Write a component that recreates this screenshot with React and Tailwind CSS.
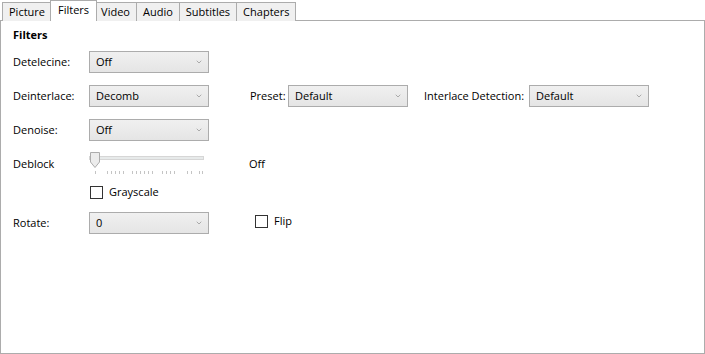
import { ChevronDown } from 'lucide-react'

const TABS = ['Picture', 'Filters', 'Video', 'Audio', 'Subtitles', 'Chapters']

function Combo({ value, className = '' }) {
  return (
    <div className={`h-[22px] w-[120px] flex items-center justify-between pl-[6px] pr-[5px] border border-[#acacac] bg-gradient-to-b from-[#f0f0f0] to-[#e5e5e5] ${className}`}>
      <span>{value}</span>
      <ChevronDown size={8} strokeWidth={2} className="text-[#8a8a8a]" />
    </div>
  )
}

function Check({ label }) {
  return (
    <div className="flex items-center">
      <div className="w-[13px] h-[13px] border border-[#333] bg-white" />
      <span className="ml-[6px]">{label}</span>
    </div>
  )
}

export default function App() {
  return (
    <div className="w-[705px] h-[354px] bg-white text-[11px] text-black flex flex-col whitespace-nowrap" style={{ fontFamily: '"Open Sans", "Noto Sans", sans-serif' }}>
      {/* tab strip */}
      <div className="flex items-end h-[21px] pl-[2px] relative z-10">
        {TABS.map(t => t === 'Filters' ? (
          <div key={t} className="h-[21px] px-[7px] -mx-[2px] bg-white border border-b-0 border-[#acacac] flex items-start pt-[1px] relative">
            {t}
          </div>
        ) : (
          <div key={t} className="h-[19px] px-[6px] bg-[#f0f0f0] border border-b-0 border-[#acacac] -ml-px first:ml-0 flex items-center">
            {t}
          </div>
        ))}
      </div>

      {/* panel */}
      <div className="flex-1 -mt-px border border-[#acacac] bg-white pl-[12px] pt-[6px]">
        <div className="font-bold leading-[16px]">Filters</div>

        <div className="flex items-center mt-[8px] h-[22px]">
          <span className="w-[76px]">Detelecine:</span>
          <Combo value="Off" />
        </div>

        <div className="flex items-center mt-[12px] h-[22px]">
          <span className="w-[76px]">Deinterlace:</span>
          <Combo value="Decomb" />
          <span className="ml-[41px] w-[38px]">Preset:</span>
          <Combo value="Default" />
          <span className="ml-[16px] w-[105px]">Interlace Detection:</span>
          <Combo value="Default" />
        </div>

        <div className="flex items-center mt-[12px] h-[22px]">
          <span className="w-[76px]">Denoise:</span>
          <Combo value="Off" />
        </div>

        <div className="flex items-start mt-[11px] h-[22px]">
          <span className="w-[76px] mt-[4px]">Deblock</span>
          <div className="w-[160px]">
            <svg width="117" height="22" viewBox="0 0 117 22">
              <rect x="0.5" y="4.5" width="114" height="3" fill="#e7eaea" stroke="#d6d6d6" />
              <path d="M1.5 0.5 H10.5 V10 L6 15.5 L1.5 10 Z" fill="#ececec" stroke="#acacac" />
              {[6, 18, 22, 26, 30, 34, 43, 47, 51, 55, 59, 63, 73, 77, 81, 85, 98, 102, 110, 113].map(x => (
                <line key={x} x1={x + 0.5} x2={x + 0.5} y1="19" y2="22" fill="none" stroke="#c4c4c4" />
              ))}
            </svg>
          </div>
          <span className="mt-[4px]">Off</span>
        </div>

        <div className="flex items-center mt-[10px] ml-[77px] h-[16px]">
          <Check label="Grayscale" />
        </div>

        <div className="flex items-center mt-[12px] h-[22px]">
          <span className="w-[76px]">Rotate:</span>
          <Combo value="0" />
          <div className="ml-[46px] -mt-[3px]">
            <Check label="Flip" />
          </div>
        </div>
      </div>
    </div>
  )
}
